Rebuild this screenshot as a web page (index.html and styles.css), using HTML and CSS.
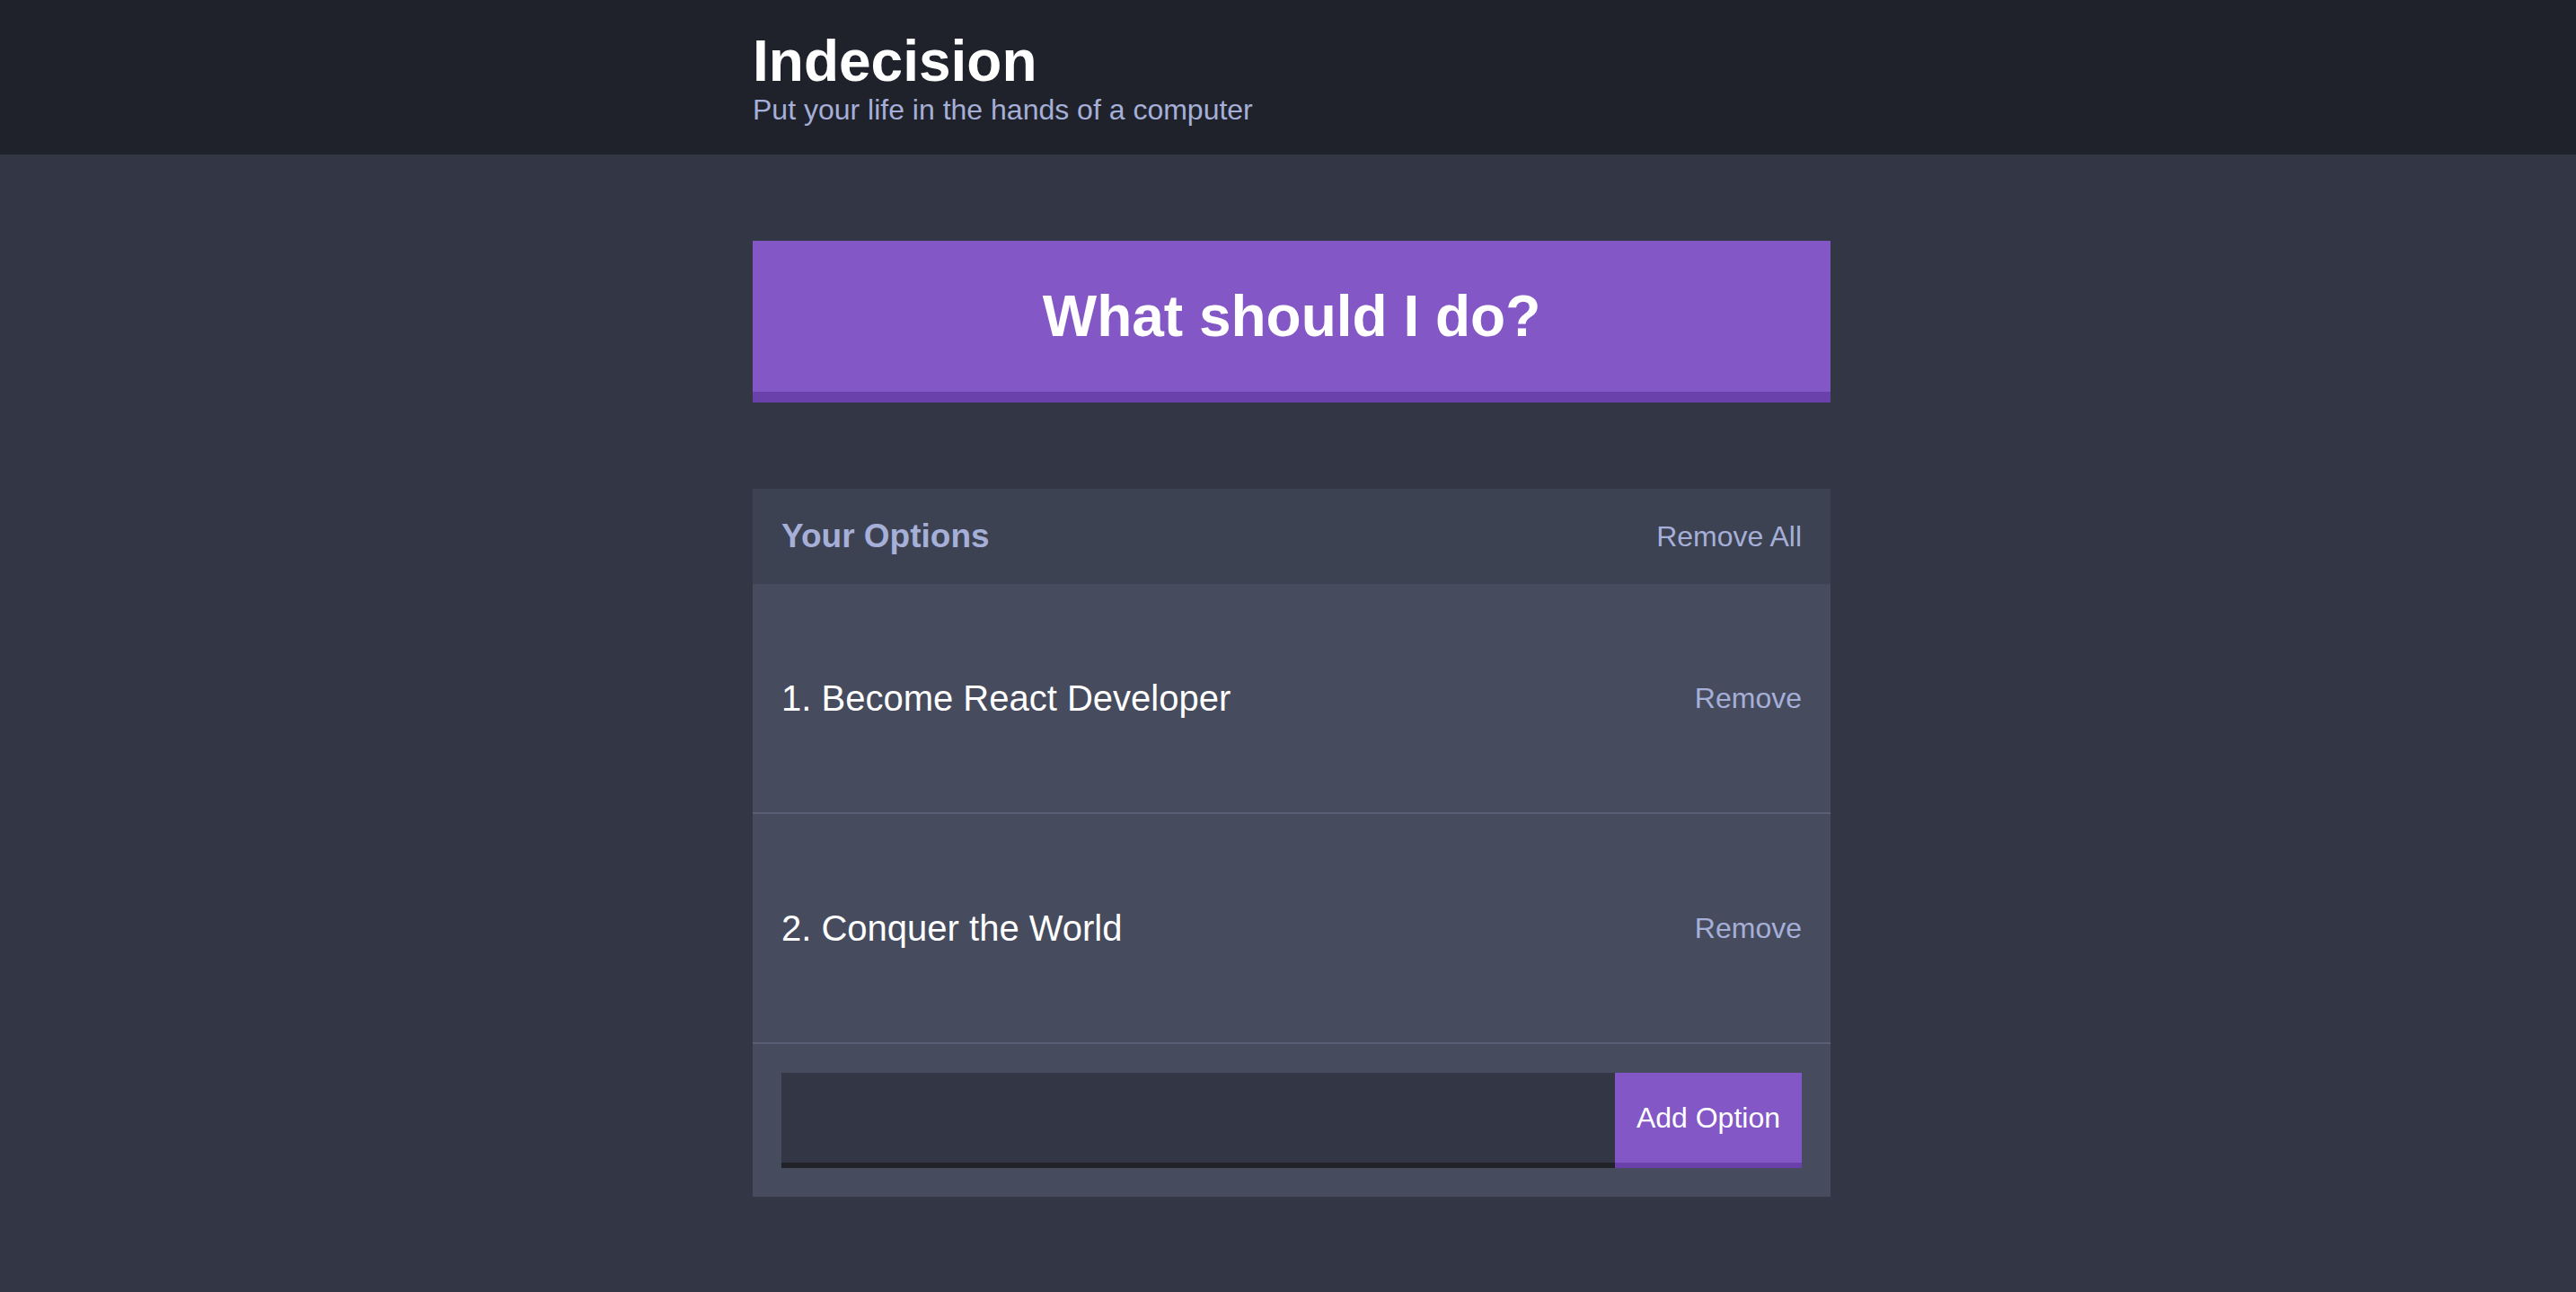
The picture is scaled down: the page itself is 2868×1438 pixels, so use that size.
FILE: index.html
```html
<!DOCTYPE html>
<html lang="en">
<head>
    <meta charset="UTF-8">
    <meta name="viewport" content="width=device-width, initial-scale=1.0">
    <title>Indecision</title>
    <link rel="stylesheet" href="styles.css">
</head>
<body>

    <div class="header">
        <div class="container">
            <h1 class="header__title">Indecision</h1>
            <h2 class="header__subtitle">Put your life in the hands of a computer</h2>
        </div>
    </div>

    <div class="container">
        <button class="big-button">What should I do?</button>

        <div class="widget">
            <div class="widget-header">
                <h3 class="widget-header__title">Your Options</h3>
                <button class="button--link">Remove All</button>
            </div>

            <div class="option">
                <p class="option__text">1. Become React Developer</p>
                <button class="button--link">Remove</button>
            </div>
            <div class="option">
                <p class="option__text">2. Conquer the World</p>
                <button class="button--link">Remove</button>
            </div>

            <form class="add-option">
                <input class="add-option__input" type="text" name="option">
                <button class="button">Add Option</button>
            </form>
        </div>
    </div>

</body>
</html>
```

FILE: styles.css
```css
body {
    margin: 0;
    background: #333745;
    color: #fff;
    font-family: "Liberation Sans", Arial, Helvetica, sans-serif;
    font-size: 32px;
}
button {
    font-family: inherit;
    cursor: pointer;
}
.container {
    max-width: 1200px;
    margin: 0 auto;
    padding-left: 8px; /* page sits a little right of centre */
}

/* header */
.header {
    background: #20222b;
    padding: 32px 0;
}
.header__title {
    margin: 0;
    font-size: 64px;
    line-height: 72px;
}
.header__subtitle {
    margin: 0;
    color: #a5afd7;
    font-size: 32px;
    font-weight: normal;
    line-height: 36px;
}

/* big button */
.big-button {
    display: block;
    width: 100%;
    margin: 96px 0;
    padding: 48px;
    background: #8357c5;
    border: none;
    border-bottom: 12px solid #6a40ab;
    color: #fff;
    font-size: 64px;
    font-weight: bold;
    line-height: 72px;
}

/* widget */
.widget {
    background: #464b5e;
    margin-bottom: 96px;
}
.widget-header {
    display: flex;
    justify-content: space-between;
    align-items: center;
    background: #3c4251;
    color: #a5afd7;
    padding: 32px;
}
.widget-header__title {
    margin: 0;
    font-size: 37px;
    line-height: 42px;
}
.button--link {
    background: none;
    border: none;
    padding: 0;
    color: #a5afd7;
    font-size: 32px;
}

.option {
    display: flex;
    justify-content: space-between;
    align-items: center;
    padding: 64px 32px;
    border-bottom: 2px solid #5a5f76;
}
.option__text {
    margin: 40px 0;
    font-size: 40px;
    line-height: 46px;
    color: #fff;
}

/* add option */
.add-option {
    display: flex;
    padding: 32px;
}
.add-option__input {
    flex-grow: 1;
    height: 106px;
    box-sizing: border-box;
    margin: 0;
    padding: 0 24px;
    background: #333745;
    border: none;
    border-bottom: 6px solid #202228;
    color: #a5afd7;
    font-family: inherit;
    font-size: 32px;
    outline: none;
}
.button {
    margin: 0;
    padding: 0 24px;
    background: #8357c5;
    border: none;
    border-bottom: 6px solid #6a40ab;
    color: #fff;
    font-size: 32px;
}
```
